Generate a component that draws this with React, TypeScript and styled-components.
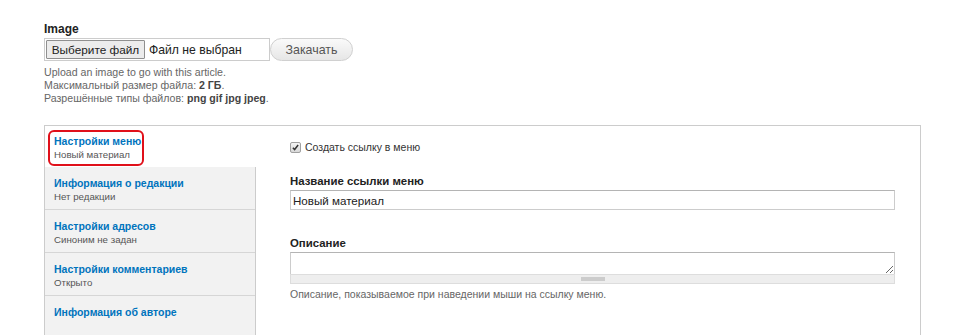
import { FC } from "react"
import styled, { createGlobalStyle } from "styled-components"

const Global = createGlobalStyle`
  body {
    margin: 0;
    background: #fff;
    font-family: "Liberation Sans", Arial, sans-serif;
    color: #333;
  }
`

const Page = styled.div`
  padding: 22px 37px 0 44px;
  box-sizing: border-box;
  width: 957px;
  height: 335px;
  overflow: hidden;
`

const FieldLabel = styled.div`
  font-size: 12px;
  font-weight: 700;
  line-height: 15px;
  color: #222;
`

const FileRow = styled.div`
  display: flex;
  align-items: center;
  margin-top: 1px;
`

const FileBox = styled.div`
  width: 226px;
  height: 23px;
  box-sizing: border-box;
  border: 1px solid #ccc;
  display: flex;
  align-items: center;
  padding-left: 1px;
  font-size: 12.2px;
  color: #222;
`

const ChooseBtn = styled.span`
  height: 19px;
  width: 99px;
  box-sizing: border-box;
  border: 1px solid #8f8f8f;
  border-radius: 1px;
  background: #ececec;
  display: flex;
  align-items: center;
  justify-content: center;
  margin-right: 4px;
  font-size: 11.8px;
`

const UploadBtn = styled.button`
  height: 23px;
  width: 83px;
  margin-left: 0;
  border: 1px solid #d0d0d0;
  border-radius: 12px;
  background: linear-gradient(#fafafa, #e6e6e6);
  color: #555;
  font-family: inherit;
  font-size: 12.4px;
  padding: 0;
`

const Help = styled.div`
  font-size: 10.6px;
  line-height: 13px;
  color: #666;
  margin-top: 5px;
  b { color: #444; }
`

const Tabs = styled.div`
  margin-top: 20px;
  border: 1px solid #ccc;
  border-bottom: none;
  width: 877px;
  box-sizing: border-box;
  display: flex;
  height: 220px;
`

const TabList = styled.div`
  width: 210px;
  flex-shrink: 0;
  background: #f2f2f2;
  border-right: 1px solid #ccc;
  align-self: stretch;
`

const Tab = styled.div<{ $active?: boolean }>`
  box-sizing: border-box;
  background: ${p => (p.$active ? "#fff" : "#f2f2f2")};
  ${p => (p.$active ? "margin-right: -1px; padding: 4px 0 1px 3px;" : "height: 43px; padding: 9px 0 0 9px; border-bottom: 1px solid #d6d6d6;")}
`

const Highlight = styled.div`
  display: inline-block;
  border: 2px solid #e0101a;
  border-radius: 6px;
  padding: 2px 1px 2px 4px;
`

const TabTitle = styled.div`
  font-size: 10.5px;
  font-weight: 700;
  line-height: 14px;
  color: #0074bd;
`

const TabSummary = styled.div`
  font-size: 9.7px;
  line-height: 14px;
  color: #555;
`

const Pane = styled.div`
  flex: 1;
  padding: 14px 24px 0 34px;
`

const CheckRow = styled.label`
  display: flex;
  align-items: center;
  gap: 4px;
  font-size: 10.5px;
  line-height: 14px;
  color: #333;
`

const Check = styled.span`
  width: 9px;
  height: 9px;
  border: 1px solid #a0a0a0;
  border-radius: 2px;
  background: linear-gradient(#f4f4f4, #d8d8d8);
  display: flex;
  align-items: center;
  justify-content: center;
`

const Label = styled.div<{ $top: number }>`
  margin-top: ${p => p.$top}px;
  font-size: 11.4px;
  font-weight: 700;
  line-height: 15px;
  color: #222;
`

const TextInput = styled.input`
  display: block;
  margin-top: 1px;
  width: 605px;
  height: 20px;
  box-sizing: border-box;
  border: 1px solid #ccc;
  border-top-color: #b4b4b4;
  padding: 0 2px;
  font-family: inherit;
  font-size: 11.6px;
  color: #222;
  outline: none;
`

const Area = styled.textarea`
  display: block;
  margin: 1px 0 0;
  width: 605px;
  height: 22px;
  box-sizing: border-box;
  border: 1px solid #ccc;
  border-top-color: #b4b4b4;
  border-bottom: none;
  resize: vertical;
  font-family: inherit;
  font-size: 12px;
  outline: none;
`

const Grippie = styled.div`
  width: 605px;
  height: 10px;
  box-sizing: border-box;
  background: #eee;
  border: 1px solid #ddd;
  display: flex;
  align-items: center;
  justify-content: center;
  &::after {
    content: "";
    width: 24px;
    height: 4px;
    background: #ccc;
  }
`

const Desc = styled.div`
  margin-top: 4px;
  font-size: 10.5px;
  line-height: 13px;
  color: #666;
`

const tabs = [
  { title: "Информация о редакции", summary: "Нет редакции" },
  { title: "Настройки адресов", summary: "Синоним не задан" },
  { title: "Настройки комментариев", summary: "Открыто" },
  { title: "Информация об авторе", summary: "" },
]

const App: FC = () => {
  return (
    <Page>
      <Global />
      <FieldLabel>Image</FieldLabel>
      <FileRow>
        <FileBox>
          <ChooseBtn>Выберите файл</ChooseBtn>
          Файл не выбран
        </FileBox>
        <UploadBtn>Закачать</UploadBtn>
      </FileRow>
      <Help>
        Upload an image to go with this article.
        <br />
        Максимальный размер файла: <b>2 ГБ</b>.
        <br />
        Разрешённые типы файлов: <b>png gif jpg jpeg</b>.
      </Help>

      <Tabs>
        <TabList>
          <Tab $active>
            <Highlight>
              <TabTitle>Настройки меню</TabTitle>
              <TabSummary>Новый материал</TabSummary>
            </Highlight>
          </Tab>
          {tabs.map(t => (
            <Tab key={t.title}>
              <TabTitle>{t.title}</TabTitle>
              <TabSummary>{t.summary}</TabSummary>
            </Tab>
          ))}
        </TabList>
        <Pane>
          <CheckRow>
            <Check>
              <svg width="7" height="7" viewBox="0 0 8 8">
                <path d="M1 4.2 L3 6.3 L7 1.2" fill="none" stroke="#333" strokeWidth="1.7" />
              </svg>
            </Check>
            Создать ссылку в меню
          </CheckRow>
          <Label $top={20}>Название ссылки меню</Label>
          <TextInput defaultValue="Новый материал" />
          <Label $top={26}>Описание</Label>
          <Area />
          <Grippie />
          <Desc>Описание, показываемое при наведении мыши на ссылку меню.</Desc>
        </Pane>
      </Tabs>
    </Page>
  )
}

export default App
